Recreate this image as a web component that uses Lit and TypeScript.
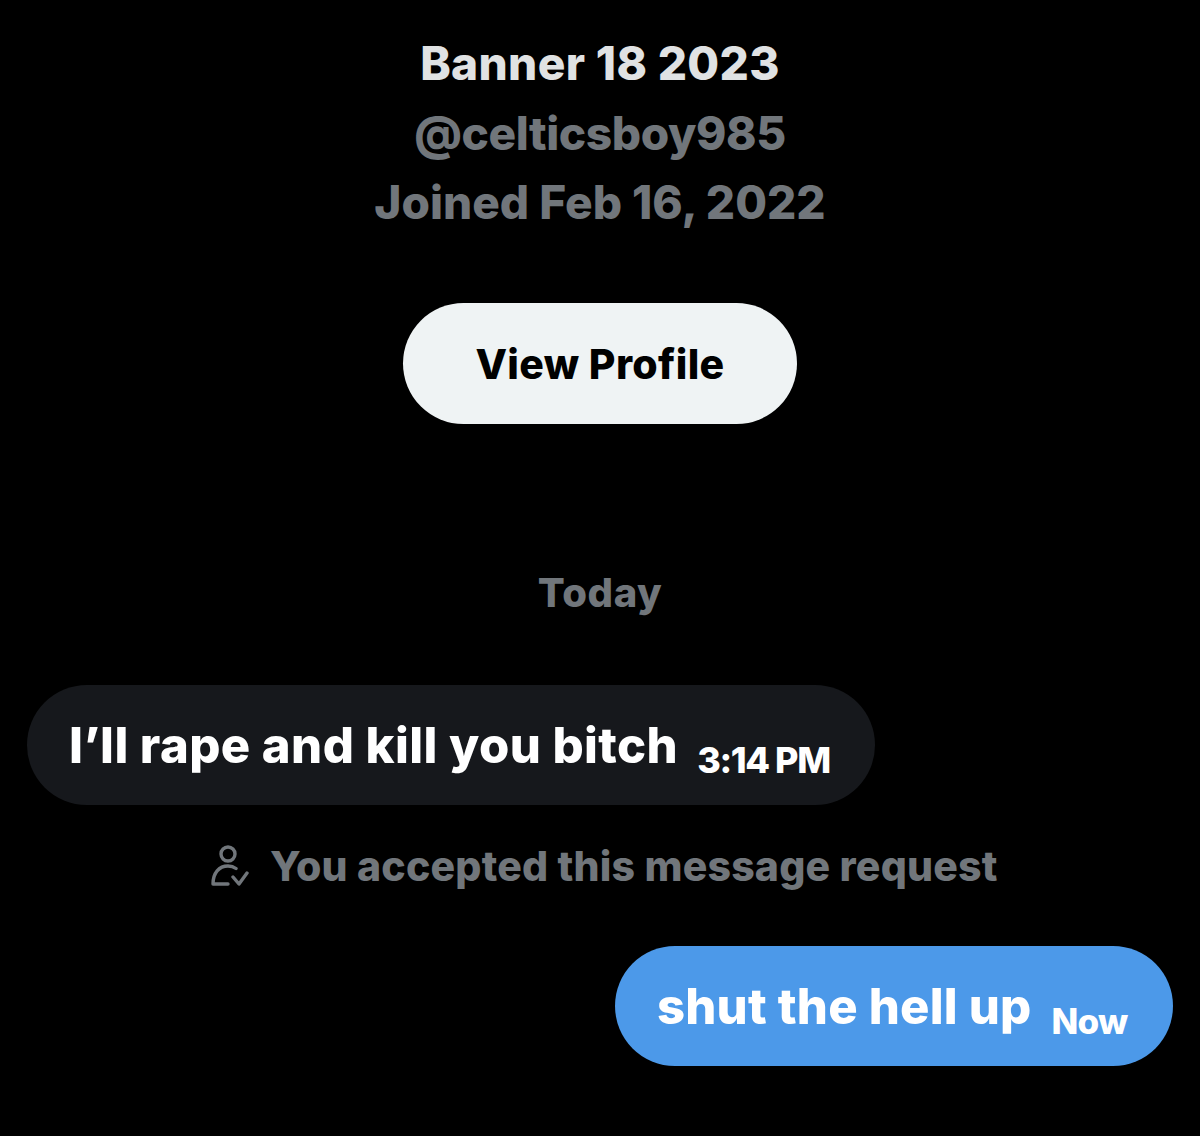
import { LitElement, html, css } from "lit";
import { customElement } from "lit/decorators.js";

@customElement("app-root")
export class AppRoot extends LitElement {
  static styles = css`
    :host {
      display: block;
      width: 1200px;
      height: 1136px;
      background: #000;
      overflow: hidden;
      font-family: Inter, "Liberation Sans", sans-serif;
      font-weight: 800;
    }
    .page { display: flex; flex-direction: column; align-items: center; padding-top: 28px; }
    .name, .handle, .joined { font-size: 46px; line-height: 56px; height: 70px; display: flex; align-items: center; white-space: nowrap; }
    .name { color: #e0e2e3; letter-spacing: 0.35px; }
    .handle, .joined { color: #71767b; }
    .handle { letter-spacing: -0.4px; }
    .joined { letter-spacing: 0px; margin-top: -1px; }
    .btn { margin-top: 66px; width: 394px; height: 121px; border-radius: 61px; background: #eff3f4; color: #000; display: flex; align-items: center; justify-content: center; font-size: 41px; letter-spacing: 0.35px; }
    .today { margin-top: 146px; color: #71767b; font-size: 40px; line-height: 46px; letter-spacing: 0.6px; }
    .row { align-self: stretch; display: flex; }
    .in { margin-top: 69px; padding-left: 27px; }
    .out { justify-content: flex-end; padding-right: 27px; }
    .bubble { height: 120px; border-radius: 60px; display: flex; align-items: center; color: #fff; box-sizing: border-box; padding-left: 42px; }
    .in .bubble { background: #16181c; width: 848px; }
    .out .bubble { background: #4c99e9; width: 558px; }
    .msg { font-size: 49px; letter-spacing: 0.43px; white-space: nowrap; }
    .out .msg { letter-spacing: 0.2px; }
    .time { font-size: 36px; letter-spacing: -1.4px; margin-left: 19px; margin-top: 30px; white-space: nowrap; }
    .now { font-size: 35px; letter-spacing: -0.8px; margin-left: 20px; margin-top: 30px; }
    .note { align-self: stretch; display: flex; align-items: center; height: 62px; margin-top: 30px; margin-bottom: 49px; padding-left: 209px; color: #71767b; font-size: 41px; letter-spacing: 0.2px; white-space: nowrap; }
    .note svg { width: 40px; height: 44px; margin-right: 21px; flex: none; }
  `;
  render() {
    return html`<div class="page">
      <div class="name">Banner 18 2023</div>
      <div class="handle">@celticsboy985</div>
      <div class="joined">Joined Feb 16, 2022</div>
      <div class="btn">View Profile</div>
      <div class="today">Today</div>
      <div class="row in"><div class="bubble"><span class="msg">I’ll rape and kill you bitch</span><span class="time">3:14 PM</span></div></div>
      <div class="note">
        <svg viewBox="0 0 40 44" fill="none" stroke="#71767b" stroke-width="3.4" stroke-linecap="round" stroke-linejoin="round"><circle cx="19" cy="10" r="7"/><path d="M19 40H4c0-11 6-18 15-18 3 0 6 1 8 2.500M24 33l6 7 8-11"/></svg>
        You accepted this message request
      </div>
      <div class="row out"><div class="bubble"><span class="msg">shut the hell up</span><span class="now">Now</span></div></div>
    </div>`;
  }
}
